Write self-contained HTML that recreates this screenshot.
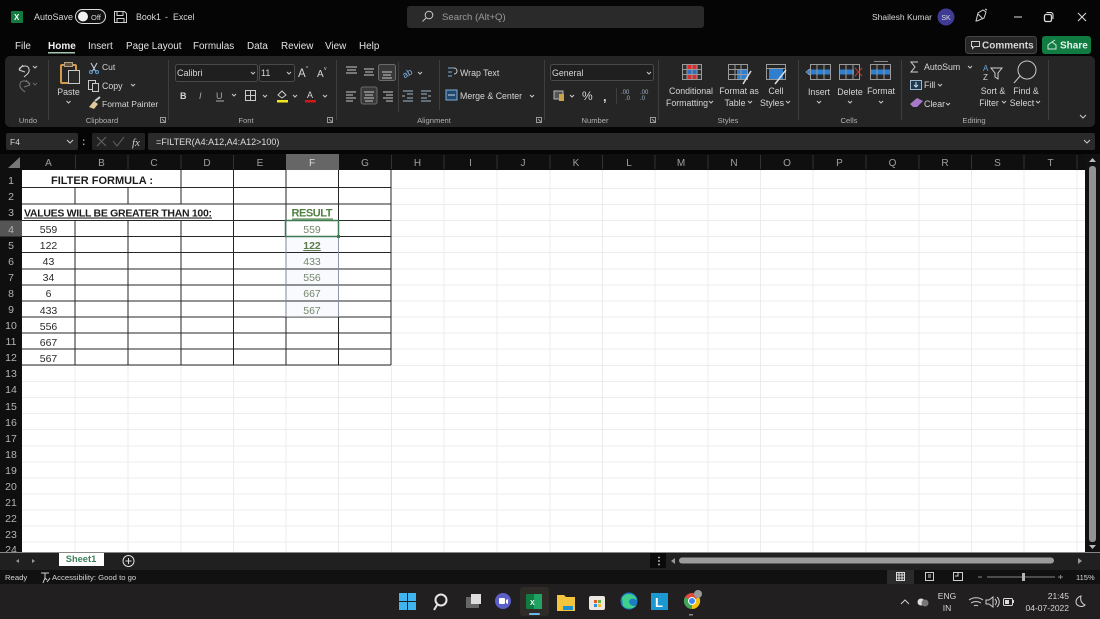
<!DOCTYPE html>
<html><head><meta charset="utf-8"><title>Book1 - Excel</title>
<style>
html,body{margin:0;padding:0;background:#000;overflow:hidden;width:1100px;height:619px}
svg{display:block;filter:blur(.3px)}
text{font-family:"Liberation Sans",sans-serif;fill:#d6d6d6;font-size:8.6px}
.t{font-size:9.9px;fill:#e2e2e2}
.g{font-size:7.6px;fill:#b0b0b0}
.h{font-size:10px;fill:#a0a0a0;text-anchor:middle}
.r{font-size:10.5px;fill:#b5b5b5;text-anchor:middle}
.c{font-size:10.5px;fill:#2a2a2a;text-anchor:middle}
.v{font-size:10.5px;fill:#75866b;text-anchor:middle}
.m{text-anchor:middle}
.ic{fill:none;stroke:#c9c9c9;stroke-width:1}
.w{fill:none;stroke:#d0d0d0;stroke-width:1}
.b{fill:#2f7fd0}
.gl{fill:none;stroke:#9a9a9a;stroke-width:1}
</style></head><body>
<svg width="1100" height="619" viewBox="0 0 1100 619" xmlns="http://www.w3.org/2000/svg">
<rect width="1100" height="619" fill="#050505"/>
<!-- title bar -->
<rect x="11" y="11" width="12" height="12" rx="1" fill="#127a41"/>
<text x="14" y="20" style="font-size:8px;fill:#fff;font-weight:bold">X</text>
<text x="34" y="20" style="font-size:9px">AutoSave</text>
<rect x="75.500" y="9.500" width="30" height="14" rx="7" fill="#111" stroke="#ddd"/>
<circle cx="83" cy="16.500" r="5" fill="#f2f2f2"/>
<text x="91" y="20" style="font-size:7.500px">Off</text>
<path class="w" d="M114.500 11.500h10l2 2v9h-12zM117 11.500v4h6v-4M117 22.500v-4h7v4"/>
<text x="136" y="20" style="font-size:8.800px">Book1</text>
<text x="165" y="20" style="font-size:8.800px">-</text>
<text x="173" y="20" style="font-size:8.800px">Excel</text>
<rect x="407" y="6" width="297" height="22" rx="3" fill="#2a2a2a"/>
<circle cx="429" cy="15" r="3.800" class="ic"/><path class="ic" d="M426 18l-3.500 3.500"/>
<text x="442" y="20" style="font-size:9.600px;fill:#9a9a9a">Search (Alt+Q)</text>
<text x="872" y="20" style="font-size:8.500px">Shailesh Kumar</text>
<circle cx="946" cy="17" r="8.500" fill="#3f3a94"/>
<text x="946" y="20" class="m" style="font-size:7px;fill:#ddd">SK</text>
<path class="w" d="M976 21l2-8 5-3 3 2-2 6-7 3zM985 9l2 1M978 14l5 5"/>
<path d="M1014 17h8" stroke="#ddd"/>
<rect x="1044.500" y="14.500" width="7" height="7" rx="1.500" fill="none" stroke="#ddd" stroke-width="1.300"/><path d="M1046.500 12.500h5l1.500 1.500v5" fill="none" stroke="#ddd"/>
<path d="M1078 13l8 8M1086 13l-8 8" stroke="#ddd"/>
<!-- tabs -->
<text class="t" x="15" y="49">File</text>
<text class="t" x="48" y="49" style="font-weight:bold;fill:#f0f0f0;font-size:10px">Home</text>
<rect x="48" y="52" width="27" height="1.500" fill="#a5c7b0"/>
<text class="t" x="88" y="49">Insert</text>
<text class="t" x="126" y="49">Page Layout</text>
<text class="t" x="193" y="49">Formulas</text>
<text class="t" x="247" y="49">Data</text>
<text class="t" x="281" y="49">Review</text>
<text class="t" x="325" y="49">View</text>
<text class="t" x="359" y="49">Help</text>
<rect x="965.500" y="36.500" width="71" height="17" rx="3" fill="#262626" stroke="#444"/>
<path class="w" d="M971.500 41.500h8v5h-5l-2 2v-2h-1z"/>
<text x="982" y="48.500" style="font-size:10px;font-weight:bold">Comments</text>
<rect x="1042" y="36" width="49" height="18" rx="3" fill="#107c41"/>
<path d="M1048 49v-4l4-3 4 3v4zM1052 42l3-2" fill="none" stroke="#cfe8da"/>
<text x="1060" y="48.500" style="font-size:10px;font-weight:bold;fill:#e8f5ee">Share</text>
<!-- ribbon -->
<rect x="5" y="56" width="1090" height="71" rx="5" fill="#252525"/>
<g stroke="#3e3e3e">
<path d="M48.500 60v60M168.500 60v60M336.500 60v60M439.500 60v50M544.500 60v60M658.500 60v60M798.500 60v60M901.500 60v60M1048.500 60v60M398.500 62v50M616.500 88v16"/>
</g>
<!-- undo -->
<path class="w" d="M19 70l4-5M19 70l6 2M19 69c2-3 9-5 10 0 1 4-3 6-5 8"/>
<path d="M33 66l2 2 2-2" class="ic"/>
<path d="M30 85l-4-5M30 85l-6 2M30 84c-2-3-9-5-10 0-1 4 3 6 5 8" fill="none" stroke="#777"/>
<path d="M33 83l2 2 2-2" fill="none" stroke="#666"/>
<text class="g m" x="28" y="123">Undo</text>
<!-- clipboard -->
<rect x="61" y="65" width="15" height="18" rx="1" fill="none" stroke="#d29a4a" stroke-width="2"/>
<rect x="64.500" y="62.500" width="8" height="4" fill="#5c5040" stroke="#b9a080"/>
<rect x="68.500" y="70.500" width="11" height="13" fill="#2a2a2a" stroke="#c8c8c8"/>
<text x="68.500" y="95" class="m" style="font-size:8.800px">Paste</text>
<path class="ic" d="M66.500 101l2 2 2-2"/>
<path d="M91 63l5 9M97 63l-5 9" stroke="#c9d6e4" fill="none"/><circle cx="91" cy="72" r="1.500" fill="none" stroke="#5f9ed8"/><circle cx="97" cy="72" r="1.500" fill="none" stroke="#5f9ed8"/>
<text x="102" y="70" style="font-size:8.500px">Cut</text>
<rect x="88.500" y="80.500" width="7" height="9" class="ic"/><rect x="92.500" y="83.500" width="6" height="8" fill="#262626" stroke="#c9c9c9"/>
<text x="102" y="89" style="font-size:8.800px">Copy</text>
<path class="ic" d="M131 84l2 2 2-2"/>
<path d="M89 107l5-6 4 3-4 5z" fill="#e2c79a"/><path d="M95 101l5-4" stroke="#ccc" stroke-width="2"/>
<text x="102" y="107" style="font-size:8.500px">Format Painter</text>
<text class="g m" x="102" y="123">Clipboard</text>
<path d="M160.500 117.500h5v5h-5zM162 119l3 3" fill="none" stroke="#999"/>
<!-- font -->
<rect x="175.500" y="64.500" width="82" height="17" rx="2" fill="#1f1f1f" stroke="#4a4a4a"/>
<text x="177" y="76" style="font-size:9px">Calibri</text><path class="ic" d="M251 72l2 2 2-2"/>
<rect x="259.500" y="64.500" width="35" height="17" rx="2" fill="#1f1f1f" stroke="#4a4a4a"/>
<text x="261" y="76" style="font-size:9px">11</text><path class="ic" d="M287 72l2 2 2-2"/>
<text x="298" y="77" style="font-size:11.500px">A</text><text x="306" y="70" style="font-size:5px">^</text>
<text x="317" y="77" style="font-size:10px">A</text><text x="324" y="70" style="font-size:5px">v</text>
<text x="180" y="99" style="font-size:9px;font-weight:bold">B</text>
<text x="199" y="99" style="font-size:9px;font-style:italic;fill:#aaa">I</text>
<text x="216" y="99" style="font-size:9px;fill:#aaa">U</text><path d="M216 101h8" stroke="#aaa"/>
<path class="ic" d="M232 94l2 2 2-2"/>
<rect x="245.500" y="90.500" width="10" height="10" class="ic"/><path class="ic" d="M250.500 90v10M245 95.500h11"/>
<path class="ic" d="M263 95l2 2 2-2"/>
<path d="M278 95l4-4 4 4-4 3z" fill="none" stroke="#ccc"/><rect x="277" y="100" width="11" height="2.500" fill="#f1e71d"/>
<path class="ic" d="M293 95l2 2 2-2"/>
<text x="307" y="98" style="font-size:9px">A</text><rect x="305" y="100" width="11" height="2.500" fill="#d01818"/>
<path class="ic" d="M323 95l2 2 2-2"/>
<text class="g m" x="246" y="123">Font</text>
<path d="M327.500 117.500h5v5h-5zM329 119l3 3" fill="none" stroke="#999"/>
<!-- alignment -->
<path class="ic" d="M346 67h11M347 70h9M346 73h11M364 69h10M365 72h8M364 75h10M346 92h10M346 95h7M346 98h10M346 101h7M393 92h-10M393 95h-7M393 98h-10M393 101h-7"/>
<rect x="378.500" y="64.500" width="17" height="16" rx="2" fill="#383838" stroke="#6a6a6a"/>
<path class="ic" d="M382 72h10M383 75h8M382 78h10"/>
<rect x="361" y="87" width="16" height="17" rx="2" fill="#383838" stroke="#6a6a6a"/>
<path class="ic" d="M364 92h10M365 95h8M364 98h10M365 101h8"/>
<text x="402" y="77" style="font-size:9px;fill:#7fb2e0" transform="rotate(-30 406 73)">ab</text>
<path class="ic" d="M418 72l2 2 2-2"/>
<path d="M403 91h10M403 101h10M407 94h6M407 98h6M402 96h3" stroke="#9fb7cc" fill="none"/>
<path d="M421 91h10M421 101h10M421 94h6M421 98h6M428 96h3" stroke="#9fb7cc" fill="none"/>
<path d="M448 68h6M448 72h4M448 76h4" stroke="#7eb0dc" fill="none"/><path d="M454 68c4 0 4 6 0 6" class="ic"/>
<text x="460" y="76" style="font-size:8.800px">Wrap Text</text>
<rect x="446" y="90" width="11" height="10" fill="#22486e" stroke="#7eb0dc"/>
<path d="M448 95h7" stroke="#cde"/>
<text x="460" y="99" style="font-size:8.800px">Merge &amp; Center</text>
<path class="ic" d="M530 95l2 2 2-2"/>
<text class="g m" x="434" y="123">Alignment</text>
<path d="M536.500 117.500h5v5h-5zM538 119l3 3" fill="none" stroke="#999"/>
<!-- number -->
<rect x="550.500" y="64.500" width="103" height="16" rx="2" fill="#1f1f1f" stroke="#4a4a4a"/>
<text x="552" y="76" style="font-size:8.800px">General</text><path class="ic" d="M647 72l2 2 2-2"/>
<rect x="554" y="91" width="9" height="8" fill="#555" stroke="#b9b9b9"/><rect x="559" y="94" width="5" height="7" fill="#c9a24a"/>
<path class="ic" d="M570 95l2 2 2-2"/>
<text x="582" y="100" style="font-size:12px">%</text>
<text x="603" y="101" style="font-size:13px;font-weight:bold">,</text>
<text x="621" y="94" style="font-size:6px;fill:#9fb7cc">.00</text><text x="625" y="100" style="font-size:6px;fill:#9fb7cc">.0</text>
<text x="640" y="94" style="font-size:6px;fill:#9fb7cc">.00</text><text x="640" y="100" style="font-size:6px;fill:#9fb7cc">.0</text>
<text class="g m" x="595" y="123">Number</text>
<path d="M650.500 117.500h5v5h-5zM652 119l3 3" fill="none" stroke="#999"/>
<!-- styles -->
<rect x="682.500" y="64.500" width="19" height="15" fill="#303030"/><rect x="687" y="65" width="10" height="4" fill="#e02b2b"/><rect x="687" y="69.500" width="10" height="5" fill="#2f6fc0"/><rect x="687" y="75" width="10" height="4" fill="#d03030"/>
<path class="gl" d="M682.500 64.500h19v15h-19zM687 64.500v15M692 64.500v15M697 64.500v15M682.500 69.500h19M682.500 74.500h19"/>
<text x="691" y="94" class="m" style="font-size:8.800px">Conditional</text>
<text x="687" y="106" class="m" style="font-size:8.800px">Formatting</text><path class="ic" d="M709 101l2 2 2-2"/>
<rect x="737" y="69" width="11" height="10" class="b"/>
<path class="gl" d="M728.500 64.500h19v15h-19zM735 64.500v15M741 64.500v15M728.500 69.500h19M728.500 74.500h19"/>
<path d="M743 84l8-13" stroke="#ddd" stroke-width="1.500"/>
<text x="739" y="94" class="m" style="font-size:8.800px">Format as</text>
<text x="735" y="106" class="m" style="font-size:8.800px">Table</text><path class="ic" d="M748 101l2 2 2-2"/>
<rect x="769" y="69" width="14" height="10" class="b"/>
<path class="gl" d="M766.500 64.500h19v15h-19zM766.500 68.500h19"/>
<path d="M775 84l11-14" stroke="#ddd" stroke-width="1.500"/>
<text x="776" y="94" class="m" style="font-size:8.800px">Cell</text>
<text x="772" y="106" class="m" style="font-size:8.800px">Styles</text><path class="ic" d="M786 101l2 2 2-2"/>
<text class="g m" x="728" y="123">Styles</text>
<!-- cells -->
<rect x="808" y="69.500" width="23" height="5" class="b"/>
<path class="gl" d="M810.500 64.500h20v15h-20zM817 64.500v15M824 64.500v15"/>
<path d="M806 72l4-3M806 72l4 3" stroke="#7fb2e0" fill="none"/>
<text x="819" y="95" class="m" style="font-size:8.800px">Insert</text><path class="ic" d="M817 101l2 2 2-2"/>
<rect x="840" y="69.500" width="14" height="5" class="b"/>
<path class="gl" d="M839.500 64.500h20v15h-20zM846 64.500v15M853 64.500v15"/>
<path d="M855 68l7 8M862 68l-7 8" stroke="#b5402f"/>
<text x="850" y="95" class="m" style="font-size:8.800px">Delete</text><path class="ic" d="M848 101l2 2 2-2"/>
<rect x="871" y="69.500" width="20" height="5" class="b"/>
<path class="gl" d="M870.500 64.500h20v15h-20zM877 64.500v15M884 64.500v15"/><path d="M874 61.500h14" stroke="#888"/>
<text x="881" y="94" class="m" style="font-size:8.800px">Format</text><path class="ic" d="M879 101l2 2 2-2"/>
<text class="g m" x="849" y="123">Cells</text>
<!-- editing -->
<path class="w" d="M918 62h-7l4 5-4 5h7"/>
<text x="924" y="70" style="font-size:8.800px">AutoSum</text><path class="ic" d="M968 66l2 2 2-2"/>
<rect x="910.500" y="80.500" width="11" height="9" fill="#1f3850" stroke="#9fb7cc"/><path d="M916 82v5M914 85l2 2 2-2" stroke="#cde" fill="none"/>
<text x="924" y="88" style="font-size:8.800px">Fill</text><path class="ic" d="M938 84l2 2 2-2"/>
<path d="M910 104l7-6 6 3-6 6h-4z" fill="#a779c9"/>
<text x="924" y="107" style="font-size:8.800px">Clear</text><path class="ic" d="M946 103l2 2 2-2"/>
<text x="983" y="71" style="font-size:8px;fill:#6aa5dc">A</text><text x="983" y="80" style="font-size:8px">Z</text>
<path class="w" d="M991 68h11l-4 5v6l-3-2v-4z"/>
<text x="993" y="94" class="m" style="font-size:8.800px">Sort &amp;</text>
<text x="989" y="106" class="m" style="font-size:8.800px">Filter</text><path class="ic" d="M1002 101l2 2 2-2"/>
<circle cx="1027" cy="70" r="9" class="ic"/><path class="ic" d="M1020 76l-6 7"/>
<text x="1026" y="94" class="m" style="font-size:8.800px">Find &amp;</text>
<text x="1022" y="106" class="m" style="font-size:8.800px">Select</text><path class="ic" d="M1036 101l2 2 2-2"/>
<text class="g m" x="974" y="123">Editing</text>
<path class="ic" d="M1080 115l3 3 3-3"/>
<!-- formula bar -->
<rect x="6" y="133" width="72" height="17" rx="2" fill="#2a2a2a"/>
<text x="10" y="145" style="font-size:8.500px">F4</text><path class="ic" d="M67 140l3 3 3-3"/>
<text x="82" y="145" style="font-size:10px;font-weight:bold;fill:#aaa">:</text>
<rect x="92" y="133" width="53" height="17" rx="2" fill="#222"/>
<path d="M97 137l9 9M106 137l-9 9M113 141l4 5 7-9" stroke="#666" fill="none"/>
<text x="132" y="146" style="font-size:11px;font-style:italic;fill:#ccc;font-family:'Liberation Serif',serif">fx</text>
<rect x="148" y="133" width="947" height="17" rx="2" fill="#2a2a2a"/>
<text x="156" y="145" style="font-size:9px;fill:#dedede">=FILTER(A4:A12,A4:A12&gt;100)</text>
<path class="ic" d="M1084 140l3 3 3-3"/>
<!-- sheet -->
<rect x="22" y="170" width="1063" height="382" fill="#fff"/>
<rect x="0" y="154" width="1085" height="16" fill="#0f0f0f"/>
<rect x="0" y="170" width="22" height="382" fill="#0f0f0f"/>
<path d="M8 168l12-11v11z" fill="#777"/>
<rect x="286" y="154" width="53" height="16" fill="#666"/>
<rect x="0" y="220.500" width="22" height="16" fill="#555"/>
<g stroke="#333">
<path d="M75.500 155v14M128 155v14M181 155v14M233.500 155v14M391.500 155v14M444 155v14M497 155v14M550 155v14M602.500 155v14M655 155v14M708 155v14M760.500 155v14M813 155v14M866 155v14M919 155v14M971.500 155v14M1024 155v14M1077 155v14"/>
</g>
<text class="h" x="48.500" y="166">A</text><text class="h" x="101.500" y="166">B</text><text class="h" x="154" y="166">C</text><text class="h" x="207" y="166">D</text><text class="h" x="260" y="166">E</text><text class="h" x="312" y="166" style="fill:#ddd">F</text><text class="h" x="365" y="166">G</text><text class="h" x="417.500" y="166">H</text><text class="h" x="470.500" y="166">I</text><text class="h" x="523" y="166">J</text><text class="h" x="576" y="166">K</text><text class="h" x="629" y="166">L</text><text class="h" x="681" y="166">M</text><text class="h" x="734" y="166">N</text><text class="h" x="787" y="166">O</text><text class="h" x="839.500" y="166">P</text><text class="h" x="892.500" y="166">Q</text><text class="h" x="945" y="166">R</text><text class="h" x="997.500" y="166">S</text><text class="h" x="1050.500" y="166">T</text>
<g>
<text class="r" x="11" y="184">1</text><text class="r" x="11" y="200">2</text><text class="r" x="11" y="216">3</text><text class="r" x="11" y="233">4</text><text class="r" x="11" y="249">5</text><text class="r" x="11" y="265">6</text><text class="r" x="11" y="281">7</text><text class="r" x="11" y="297">8</text><text class="r" x="11" y="313">9</text><text class="r" x="11" y="329">10</text><text class="r" x="11" y="345">11</text><text class="r" x="11" y="361">12</text><text class="r" x="11" y="377">13</text><text class="r" x="11" y="393">14</text><text class="r" x="11" y="410">15</text><text class="r" x="11" y="426">16</text><text class="r" x="11" y="442">17</text><text class="r" x="11" y="458">18</text><text class="r" x="11" y="474">19</text><text class="r" x="11" y="490">20</text><text class="r" x="11" y="506">21</text><text class="r" x="11" y="522">22</text><text class="r" x="11" y="538">23</text><text class="r" x="11" y="553">24</text>
</g>
<!-- light gridlines -->
<g stroke="#ececec">
<path d="M391 188.500H1085M391 204.500H1085M391 220.500H1085M391 236.500H1085M391 252.500H1085M391 269H1085M391 285H1085M391 301H1085M391 317H1085M391 333H1085M391 349H1085M22 365.500H1085M22 381.500H1085M22 397.500H1085M22 413.500H1085M22 429.500H1085M22 446H1085M22 462H1085M22 478H1085M22 494H1085M22 510H1085M22 526H1085M22 542H1085"/>
<path d="M444 170V552M497 170V552M550 170V552M602.500 170V552M655 170V552M708 170V552M760.500 170V552M813 170V552M866 170V552M919 170V552M971.500 170V552M1024 170V552M1077 170V552M75 365V552M128 365V552M181 365V552M233.500 365V552M286 365V552M338.500 365V552M391.500 365V552"/>
</g>
<!-- black borders -->
<g stroke="#262626" stroke-width="1">
<path d="M22 187.500H391M22 204H391M22 220.500H391M22 236.500H391M22 252.500H391M22 269H391M22 285H391M22 301H391M22 317H391M22 333H391M22 349H391M22 365H391"/>
<path d="M181 170V188M233.500 170V365M286 170V365M338.500 170V365M391 170V365M75 188V204M128 188V204M181 188V204M75 220V365M128 220V365M181 220V365"/>
</g>
<!-- cell text -->
<text x="51" y="184" style="font-size:11px;font-weight:bold;fill:#1c1c1c">FILTER FORMULA :</text>
<text x="24" y="216.500" style="font-size:10.500px;font-weight:bold;fill:#1c1c1c;text-decoration:underline" textLength="188">VALUES WILL BE GREATER THAN 100:</text>
<text x="312" y="216.500" class="m" style="font-size:11px;font-weight:bold;fill:#4f8040" textLength="41">RESULT</text>
<path d="M292 219h41" stroke="#3f7a35" stroke-width="1"/>
<rect x="286.500" y="237" width="52" height="80" fill="#eaf1fa" opacity=".35"/>
<g stroke="#262626"><path d="M286 252.500H391M286 269H391M286 285H391M286 301H391"/></g>
<path d="M286 221v96M338.500 221v96" stroke="#b9cde6" opacity=".6"/>
<text class="c" x="48.500" y="233">559</text><text class="c" x="48.500" y="249">122</text><text class="c" x="48.500" y="265">43</text><text class="c" x="48.500" y="281">34</text><text class="c" x="48.500" y="297">6</text><text class="c" x="48.500" y="314">433</text><text class="c" x="48.500" y="330">556</text><text class="c" x="48.500" y="346">667</text><text class="c" x="48.500" y="362">567</text>
<text class="v" x="312" y="233">559</text>
<text class="v" x="312" y="249" style="font-weight:bold;fill:#5c7a4c;text-decoration:underline">122</text>
<text class="v" x="312" y="265">433</text><text class="v" x="312" y="281">556</text><text class="v" x="312" y="297">667</text><text class="v" x="312" y="314">567</text>
<rect x="285.500" y="220.500" width="53" height="16" fill="none" stroke="#3f7a55" stroke-width="1.500"/>
<rect x="337" y="235" width="3" height="3" fill="#3f7a55"/>
<!-- v scrollbar -->
<rect x="1085" y="154" width="15" height="398" fill="#111"/>
<path d="M1089 162l3.500-4 3.500 4z" fill="#bbb"/><path d="M1089 545l3.500 4 3.500-4z" fill="#bbb"/>
<rect x="1089" y="166" width="7" height="376" rx="3" fill="#929292"/>
<!-- sheet tabs -->
<rect x="0" y="552" width="1100" height="1" fill="#888"/>
<rect x="0" y="553" width="1100" height="17" fill="#202020"/>
<path d="M19 559v4l-3-2zM32 559v4l3-2z" fill="#999"/>
<path d="M59 553h45v13H59z" fill="#fff"/>
<text x="81" y="562" class="m" style="font-size:9.300px;font-weight:bold;fill:#3f7f5c">Sheet1</text>
<circle cx="128.500" cy="561" r="5.500" fill="none" stroke="#ddd"/><path d="M125.500 561h6M128.500 558v6" stroke="#ddd"/>
<rect x="650" y="553" width="16" height="15" fill="#0a0a0a"/>
<text x="659" y="564" class="m" style="font-size:10px;font-weight:bold;fill:#ddd">&#8942;</text>
<path d="M675 558v6l-4-3z" fill="#999"/>
<rect x="679" y="557.500" width="375" height="6" rx="3" fill="#9b9b9b"/>
<path d="M1078 558v6l4-3z" fill="#999"/>
<!-- status -->
<rect x="0" y="570" width="1100" height="14" fill="#111"/>
<text x="5" y="580" style="font-size:7.700px">Ready</text>
<path class="w" d="M41 573h8M45 573v5l-2 5M45 578l2 2M50 578l-3 4"/>
<text x="52" y="580" style="font-size:7.700px">Accessibility: Good to go</text>
<rect x="887" y="570" width="27" height="14" fill="#2b2b2b"/>
<rect x="896.500" y="572.500" width="8" height="8" fill="none" stroke="#ddd"/><path d="M899 573v8M902 573v8M896 575h9M896 578h9" stroke="#ddd"/>
<rect x="925.500" y="572.500" width="8" height="8" fill="none" stroke="#ccc"/><path d="M928 575h3M928 577h3" stroke="#ccc"/>
<path class="w" d="M953.500 572.500h9v8h-9zM958 573v3h-3"/>
<path d="M978 577h4M987 577h68M1058 577h5M1060.500 575v4" stroke="#888"/>
<rect x="1022" y="573" width="3" height="8" fill="#b5b5b5"/>
<text x="1076" y="580" style="font-size:7.500px">115%</text>
<!-- taskbar -->
<rect x="0" y="584" width="1100" height="35" fill="#211f20"/>
<rect x="520" y="587" width="29" height="29" rx="3" fill="#2f2c28"/>
<g fill="#3fb4ee"><rect x="399" y="593" width="8" height="8"/><rect x="408" y="593" width="8" height="8"/><rect x="399" y="602" width="8" height="8"/><rect x="408" y="602" width="8" height="8"/></g>
<circle cx="441" cy="600" r="5.500" fill="none" stroke="#e5e5e5" stroke-width="2"/><path d="M437 605l-3 5" stroke="#e5e5e5" stroke-width="2"/>
<rect x="466" y="597" width="13" height="11" fill="#666"/><rect x="471" y="594" width="10" height="10" fill="#ddd"/>
<circle cx="503" cy="601" r="8" fill="#5b5fc7"/><rect x="499" y="598" width="6" height="6" rx="1" fill="#fff"/><path d="M506 600l2-1v5l-2-1z" fill="#fff"/>
<rect x="526" y="594" width="16" height="15" rx="1" fill="#107c41"/><rect x="534" y="594" width="8" height="15" fill="#21a366"/>
<text x="530" y="605" style="font-size:7px;font-weight:bold;fill:#fff">X</text>
<rect x="529" y="613" width="11" height="2" rx="1" fill="#6cb8e8"/>
<path d="M557 595h7l2 2h9v14h-18z" fill="#f3c53c"/><rect x="563" y="606" width="10" height="4" fill="#1f8fd0"/>
<rect x="589" y="596" width="16" height="14" rx="2" fill="#ece8e0"/><rect x="594" y="600" width="3" height="3" fill="#e05a2b"/><rect x="598" y="600" width="3" height="3" fill="#6bb33f"/><rect x="594" y="604" width="3" height="3" fill="#2f8fdc"/><rect x="598" y="604" width="3" height="3" fill="#f2b82e"/>
<circle cx="629" cy="601" r="8.500" fill="#1b7dc4"/><path d="M622 598c3-6 13-5 15 2-4-2-7-2-8 2 1 4 6 5 8 3-3 4-10 5-14 1" fill="#3fcf8e"/>
<rect x="651" y="593" width="17" height="17" fill="#1b98d0"/>
<text x="655" y="607" style="font-size:13px;font-weight:bold;fill:#fff">L</text>
<circle cx="692" cy="601" r="8" fill="#dd4b39"/><path d="M692 601l7-4a8 8 0 0 1-7 12z" fill="#f4c20d"/><path d="M692 601v8a8 8 0 0 1-7-12z" fill="#3fa757"/><circle cx="692" cy="601" r="3.500" fill="#4285f4" stroke="#fff"/><circle cx="698" cy="594" r="4" fill="#9a9a9a"/>
<rect x="689" y="614" width="4" height="1.500" fill="#888"/>
<path class="w" d="M901 604l4-4 4 4"/>
<circle cx="921" cy="602" r="3.500" fill="#ddd"/><circle cx="925" cy="603" r="3.500" fill="#777"/>
<text x="947" y="599" class="m" style="font-size:8.500px">ENG</text>
<text x="947" y="611" class="m" style="font-size:8.500px">IN</text>
<path class="w" d="M969 600c4-3 10-3 14 0M971 603c3-2 7-2 10 0M974 606c1-1 3-1 4 0"/>
<path class="w" d="M986 600h3l4-3v10l-4-3h-3zM995 599c2 2 2 4 0 6M997 597c3 3 3 7 0 10"/>
<rect x="1003.500" y="598.500" width="9" height="7" rx="1" fill="none" stroke="#ddd"/><rect x="1005" y="600" width="4" height="4" fill="#ddd"/><rect x="1013" y="600" width="1" height="3" fill="#ddd"/>
<text x="1069" y="599" style="font-size:8.500px;text-anchor:end">21:45</text>
<text x="1069" y="611" style="font-size:8.500px;text-anchor:end">04-07-2022</text>
<path class="w" d="M1081 596c-1 4 0 7 4 9-3 3-9 1-9-3 0-3 2-5 5-6z"/>
</svg>
</body></html>
